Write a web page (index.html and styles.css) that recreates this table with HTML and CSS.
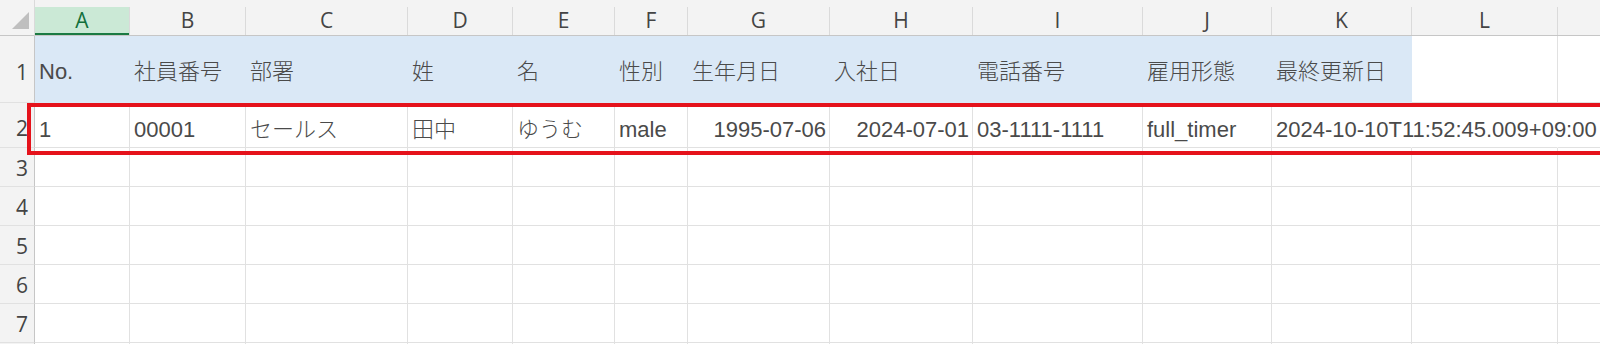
FILE: index.html
```html
<!DOCTYPE html>
<html lang="ja">
<head>
<meta charset="utf-8">
<title>Sheet</title>
<link rel="stylesheet" href="styles.css">
</head>
<body>
<div class="sheet">
  <div class="corner"><svg width="17" height="17" viewBox="0 0 17 17"><polygon points="17,0 17,17 0,17" fill="#bfbfbf"/></svg></div>
  <div class="ch sel"><span>A</span></div>
  <div class="ch"><span>B</span></div>
  <div class="ch"><span>C</span></div>
  <div class="ch"><span>D</span></div>
  <div class="ch"><span>E</span></div>
  <div class="ch"><span>F</span></div>
  <div class="ch"><span>G</span></div>
  <div class="ch"><span>H</span></div>
  <div class="ch"><span>I</span></div>
  <div class="ch"><span>J</span></div>
  <div class="ch"><span>K</span></div>
  <div class="ch"><span>L</span></div>
  <div class="ch"><span></span></div>

  <div class="rh rh-tall">1</div>
  <div class="c h">No.</div>
  <div class="c h">社員番号</div>
  <div class="c h">部署</div>
  <div class="c h">姓</div>
  <div class="c h">名</div>
  <div class="c h">性別</div>
  <div class="c h">生年月日</div>
  <div class="c h">入社日</div>
  <div class="c h">電話番号</div>
  <div class="c h">雇用形態</div>
  <div class="c h">最終更新日</div>
  <div class="c"></div>
  <div class="c"></div>

  <div class="rh rh-tall">2</div>
  <div class="c r2">1</div>
  <div class="c r2">00001</div>
  <div class="c r2">セールス</div>
  <div class="c r2">田中</div>
  <div class="c r2">ゆうむ</div>
  <div class="c r2">male</div>
  <div class="c r2 num">1995-07-06</div>
  <div class="c r2 num">2024-07-01</div>
  <div class="c r2">03-1111-1111</div>
  <div class="c r2">full_timer</div>
  <div class="c r2 spill">2024-10-10T11:52:45.009+09:00</div>
  <div class="c r2 spill"></div>
  <div class="c r2"></div>

  <div class="rh">3</div>
  <div class="c"></div><div class="c"></div><div class="c"></div><div class="c"></div><div class="c"></div><div class="c"></div><div class="c"></div><div class="c"></div><div class="c"></div><div class="c"></div><div class="c"></div><div class="c"></div><div class="c"></div>
  <div class="rh">4</div>
  <div class="c"></div><div class="c"></div><div class="c"></div><div class="c"></div><div class="c"></div><div class="c"></div><div class="c"></div><div class="c"></div><div class="c"></div><div class="c"></div><div class="c"></div><div class="c"></div><div class="c"></div>
  <div class="rh">5</div>
  <div class="c"></div><div class="c"></div><div class="c"></div><div class="c"></div><div class="c"></div><div class="c"></div><div class="c"></div><div class="c"></div><div class="c"></div><div class="c"></div><div class="c"></div><div class="c"></div><div class="c"></div>
  <div class="rh">6</div>
  <div class="c"></div><div class="c"></div><div class="c"></div><div class="c"></div><div class="c"></div><div class="c"></div><div class="c"></div><div class="c"></div><div class="c"></div><div class="c"></div><div class="c"></div><div class="c"></div><div class="c"></div>
  <div class="rh">7</div>
  <div class="c"></div><div class="c"></div><div class="c"></div><div class="c"></div><div class="c"></div><div class="c"></div><div class="c"></div><div class="c"></div><div class="c"></div><div class="c"></div><div class="c"></div><div class="c"></div><div class="c"></div>
  <div class="rh"></div>
  <div class="c"></div><div class="c"></div><div class="c"></div><div class="c"></div><div class="c"></div><div class="c"></div><div class="c"></div><div class="c"></div><div class="c"></div><div class="c"></div><div class="c"></div><div class="c"></div><div class="c"></div>

  <div class="highlight"></div>
</div>
</body>
</html>
```
FILE: styles.css
```css
html, body {
  margin: 0;
  padding: 0;
  background: #ffffff;
  overflow: hidden;
  width: 1600px;
  height: 344px;
}

.sheet {
  position: relative;
  display: grid;
  grid-template-columns: 35px 95px 116px 162px 105px 102px 73px 142px 143px 170px 129px 140px 146px 200px;
  grid-template-rows: 36px 67px 45px repeat(6, 39px);
  width: 1638px;
  font-family: "Liberation Sans", "Noto Sans CJK JP", sans-serif;
}

.corner {
  box-sizing: border-box;
  background: #f3f3f3;
  border-bottom: 1px solid #c6c6c6;
  border-right: 1px solid #dadada;
  padding: 12px 0 0 12px;
  display: flex;
  align-items: flex-start;
}

.ch {
  box-sizing: border-box;
  background: #f3f3f3;
  border-bottom: 1px solid #c6c6c6;
  padding-top: 7px;
}

.ch > span {
  box-sizing: border-box;
  display: flex;
  height: 28px;
  align-items: center;
  justify-content: center;
  border-right: 1px solid #dadada;
  font-family: "Open Sans", "Liberation Sans", sans-serif;
  font-size: 21px;
  line-height: 1.2;
  color: #444444;
}

.ch.sel > span {
  background: #cbe9d6;
  color: #12703c;
  box-shadow: inset 0 -2px 0 #1b7a43;
}

.rh {
  box-sizing: border-box;
  background: #f3f3f3;
  border-right: 1px solid #c6c6c6;
  border-bottom: 1px solid #e1e1e1;
  display: flex;
  align-items: center;
  justify-content: flex-end;
  padding: 4px 6px 0 0;
  font-family: "Open Sans", "Liberation Sans", sans-serif;
  font-size: 21px;
  line-height: 1.2;
  color: #444444;
}

.rh-tall {
  padding-top: 8px;
}

.c {
  box-sizing: border-box;
  border-right: 1px solid #e1e1e1;
  border-bottom: 1px solid #e1e1e1;
  display: flex;
  align-items: center;
  padding: 0 4px;
  white-space: nowrap;
  font-size: 22px;
  font-weight: 300;
  line-height: 1.2;
  color: #4a4a4a;
  min-width: 0;
}

.c.h {
  background: #dae8f6;
  border-color: #dae8f6;
  padding-top: 6px;
}

.c.r2 {
  padding-top: 10px;
}

.c.num {
  justify-content: flex-end;
  padding-right: 3px;
}

.c.spill {
  border-right-color: transparent;
}

.highlight {
  position: absolute;
  left: 27px;
  top: 103px;
  width: 1610px;
  height: 52px;
  box-sizing: border-box;
  border: 4px solid #e5121b;
  pointer-events: none;
}
```
